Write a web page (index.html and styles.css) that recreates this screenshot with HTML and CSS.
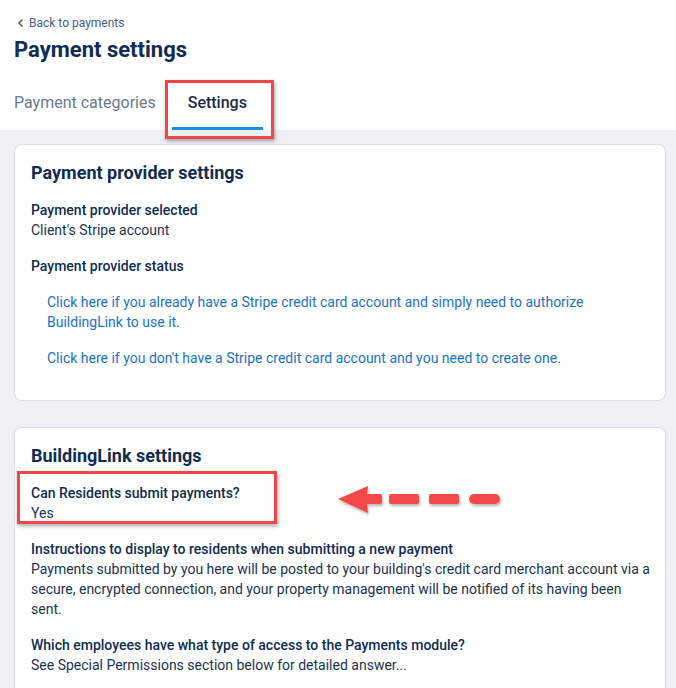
FILE: index.html
```html
<!DOCTYPE html>
<html lang="en">
<head>
<meta charset="UTF-8">
<meta name="viewport" content="width=device-width, initial-scale=1.0">
<title>Payment settings</title>
<link rel="stylesheet" href="styles.css">
</head>
<body>
<header class="page-header">
    <a class="back-link" href="#">
        <svg width="8" height="10" viewBox="0 0 8 10"><path d="M5.5 1.5 L2 5 L5.5 8.5" fill="none" stroke="currentColor" stroke-width="1.5"/></svg>
        Back to payments
    </a>
    <h1>Payment settings</h1>
    <nav class="tabs">
        <a class="tab" href="#">Payment categories</a>
        <a class="tab active marked" href="#">Settings</a>
    </nav>
</header>
<main class="content">
    <section class="card">
        <h2>Payment provider settings</h2>
        <div class="field">
            <div class="label">Payment provider selected</div>
            <div class="value">Client's Stripe account</div>
        </div>
        <div class="field">
            <div class="label">Payment provider status</div>
        </div>
        <a class="provider-link" href="#">Click here if you already have a Stripe credit card account and simply need to authorize BuildingLink to use it.</a>
        <a class="provider-link" href="#">Click here if you don't have a Stripe credit card account and you need to create one.</a>
    </section>
    <section class="card">
        <h2>BuildingLink settings</h2>
        <div class="field marked">
            <div class="label">Can Residents submit payments?</div>
            <div class="value">Yes</div>
        </div>
        <svg class="arrow" width="170" height="40" viewBox="0 0 170 40">
            <defs>
                <filter id="shade" x="-10%" y="-30%" width="130%" height="180%">
                    <feDropShadow dx="1" dy="2" stdDeviation="1.5" flood-color="#000" flood-opacity="0.3"/>
                </filter>
            </defs>
            <g fill="#f34848" filter="url(#shade)">
                <path d="M2 16 L32 3 L31 11 L44 11 Q46 11 46 13 L46 19 Q46 21 44 21 L31 21 L32 30 Z"/>
                <rect x="53" y="11" width="30" height="10" rx="2"/>
                <rect x="93" y="11" width="30" height="10" rx="2"/>
                <rect x="133" y="11" width="31" height="10" rx="5"/>
            </g>
        </svg>
        <div class="field">
            <div class="label">Instructions to display to residents when submitting a new payment</div>
            <div class="value">Payments submitted by you here will be posted to your building's credit card merchant account via a secure, encrypted connection, and your property management will be notified of its having been sent.</div>
        </div>
        <div class="field">
            <div class="label">Which employees have what type of access to the Payments module?</div>
            <div class="value">See Special Permissions section below for detailed answer...</div>
        </div>
    </section>
</main>
</body>
</html>
```
FILE: styles.css
```css
body {
    margin: 0;
    font-family: Roboto, "Liberation Sans", sans-serif;
    color: #1b3350;
    background-color: #eff0f4;
    font-size: 14px;
    line-height: 20px;
}
a {
    text-decoration: none;
}
.page-header {
    background-color: #fff;
    padding: 14px 14px 0;
}
.back-link {
    display: flex;
    align-items: center;
    gap: 4px;
    color: #456083;
    font-size: 12px;
    line-height: 18px;
    margin-left: 3px;
}
h1 {
    margin: 4px 0 0;
    font-size: 22px;
    line-height: 28px;
    font-weight: 700;
    color: #0f2d52;
}
.tabs {
    display: flex;
    margin-top: 28px;
}
.tab {
    position: relative;
    padding: 0 16px 13px;
    font-size: 16px;
    line-height: 22px;
    color: #6b7a8c;
    border-bottom: 3px solid transparent;
}
.tab:first-child {
    padding-left: 0;
}
.tab.active {
    color: #1a2b45;
    font-weight: 500;
    border-bottom-color: #1a8de0;
}
.marked {
    position: relative;
}
.marked::after {
    content: "";
    position: absolute;
    border: 3px solid #f04848;
    box-shadow: 1px 2px 4px rgba(0,0,0,0.35);
    pointer-events: none;
}
.tab.marked::after {
    left: -7px;
    right: -11px;
    top: -12px;
    bottom: -12px;
}
.field.marked::after {
    left: -14px;
    top: -12px;
    width: 254px;
    bottom: -1px;
}
.content {
    padding: 14px 10px 0 14px;
    display: flex;
    flex-direction: column;
    gap: 26px;
}
.card {
    position: relative;
    background-color: #fff;
    border: 1px solid #d9dde3;
    border-radius: 8px;
    padding: 16px 10px 16px 16px;
}
h2 {
    margin: 0 0 15px;
    font-size: 18px;
    line-height: 24px;
    font-weight: 700;
    color: #0f2d52;
}
.field {
    margin-bottom: 16px;
}
.label {
    font-weight: 500;
    color: #0f2d52;
}
.provider-link {
    display: block;
    color: #1a73c4;
    padding-left: 16px;
    margin-bottom: 16px;
}
.arrow {
    position: absolute;
    left: 321px;
    top: 55px;
}
```
